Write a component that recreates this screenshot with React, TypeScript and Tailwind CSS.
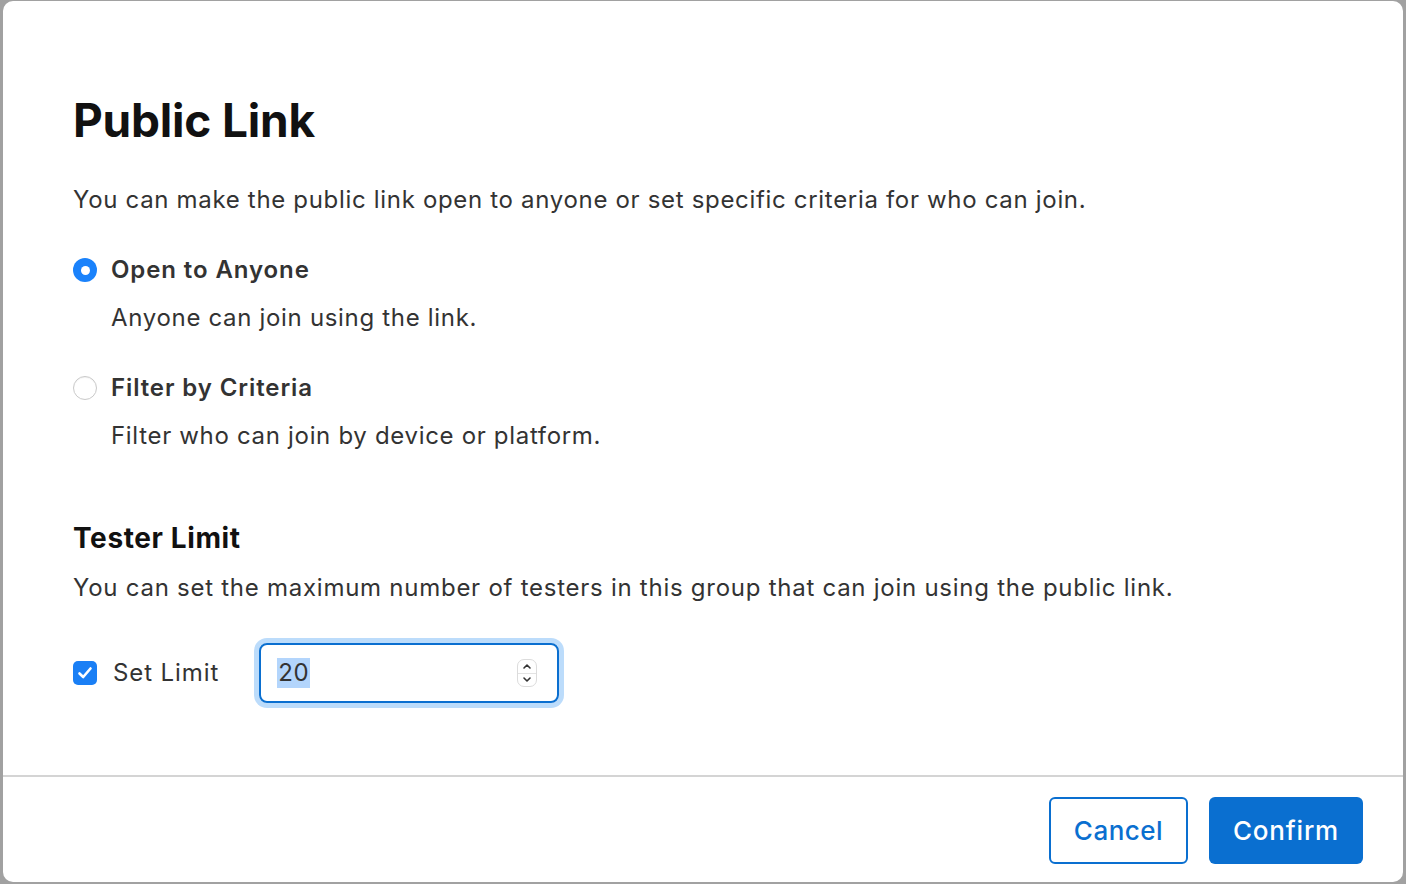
import React from "react";

function Radio({ checked }: { checked: boolean }) {
  if (checked) {
    return (
      <span className="flex h-6 w-6 items-center justify-center rounded-full bg-[#1a82fb]">
        <span className="h-[9px] w-[9px] rounded-full bg-white" />
      </span>
    );
  }
  return (
    <span className="block h-6 w-6 rounded-full border border-[#c9c9c9] bg-white shadow-[inset_0_1px_1px_rgba(0,0,0,0.05)]" />
  );
}

function Option({ label, hint, checked }: { label: string; hint: string; checked: boolean }) {
  return (
    <div>
      <div className="flex h-8 items-center">
        <span className="w-[38px] shrink-0">
          <Radio checked={checked} />
        </span>
        <span className="text-[24px] font-semibold tracking-[0.9px] text-[#333]">{label}</span>
      </div>
      <p className="mt-4 pl-[38px] text-[24px] leading-8 tracking-[0.68px] text-[#333]">{hint}</p>
    </div>
  );
}

function Stepper() {
  return (
    <span className="flex h-[28px] w-[20px] flex-col items-center justify-between rounded-[7px] border border-[#dcdcdc] bg-white py-[2px] text-[#333]">
      <svg width="10" height="8" viewBox="0 0 10 8" fill="none">
        <path d="M2 6 L5 3 L8 6" stroke="currentColor" strokeWidth="1.6" strokeLinecap="round" strokeLinejoin="round" />
      </svg>
      <span className="h-px w-full bg-[#e3e3e3]" />
      <svg width="10" height="8" viewBox="0 0 10 8" fill="none">
        <path d="M2 2 L5 5 L8 2" stroke="currentColor" strokeWidth="1.6" strokeLinecap="round" strokeLinejoin="round" />
      </svg>
    </span>
  );
}

export default function App() {
  return (
    <div
      className="h-[884px] w-[1406px] overflow-hidden bg-[#a1a1a1] pl-[3px] pt-px"
      style={{ fontFamily: "Inter, 'Noto Sans', sans-serif" }}
    >
      <div className="flex h-[881px] w-[1400px] flex-col rounded-[10px] bg-white">
        <div className="flex-1 pl-[70px] pt-[91px]">
          <h1 className="text-[46px] font-bold leading-[56px] tracking-[-0.2px] text-[#111]">Public Link</h1>
          <p className="mt-9 text-[24px] leading-8 tracking-[0.68px] text-[#333]">
            You can make the public link open to anyone or set specific criteria for who can join.
          </p>

          <div className="mt-[38px] flex flex-col gap-[38px]">
            <Option label="Open to Anyone" hint="Anyone can join using the link." checked />
            <Option label="Filter by Criteria" hint="Filter who can join by device or platform." checked={false} />
          </div>

          <h2 className="mt-[69px] text-[28px] font-bold leading-[34px] tracking-[0.6px] text-[#111]">Tester Limit</h2>
          <p className="mt-[17px] text-[24px] leading-8 tracking-[0.74px] text-[#333]">
            You can set the maximum number of testers in this group that can join using the public link.
          </p>

          <div className="mt-[39px] flex items-center">
            <span className="flex h-6 w-6 items-center justify-center rounded-[5px] bg-[#1a7ff5]">
              <svg width="16" height="14" viewBox="0 0 16 14" fill="none">
                <path d="M2.5 7.5 L6.2 11 L13.5 2.5" stroke="white" strokeWidth="2.6" strokeLinecap="round" strokeLinejoin="round" />
              </svg>
            </span>
            <span className="ml-4 text-[24px] tracking-[0.9px] text-[#333]">Set Limit</span>
            <div className="ml-[40px] flex h-[60px] w-[300px] items-center rounded-[8px] border-2 border-[#0a6fd0] pl-[16px] pr-[20px] shadow-[0_0_0_5px_#bcdcfb]">
              <span className="bg-[#b3d5fc] px-px text-[24px] leading-[30px] tracking-[0.6px] text-[#333]">20</span>
              <span className="flex-1" />
              <Stepper />
            </div>
          </div>
        </div>

        <div className="flex justify-end gap-[21px] border-t-2 border-[#d4d4d4] pb-[18px] pr-[40px] pt-[20px]">
          <button className="h-[67px] w-[139px] rounded-[6px] border-2 border-[#0a6fd0] bg-white text-[26px] font-medium tracking-[0.5px] text-[#0a6fd0]">
            Cancel
          </button>
          <button className="h-[67px] w-[154px] rounded-[6px] bg-[#0a6fd0] text-[26px] font-medium tracking-[0.8px] text-white">
            Confirm
          </button>
        </div>
      </div>
    </div>
  );
}
